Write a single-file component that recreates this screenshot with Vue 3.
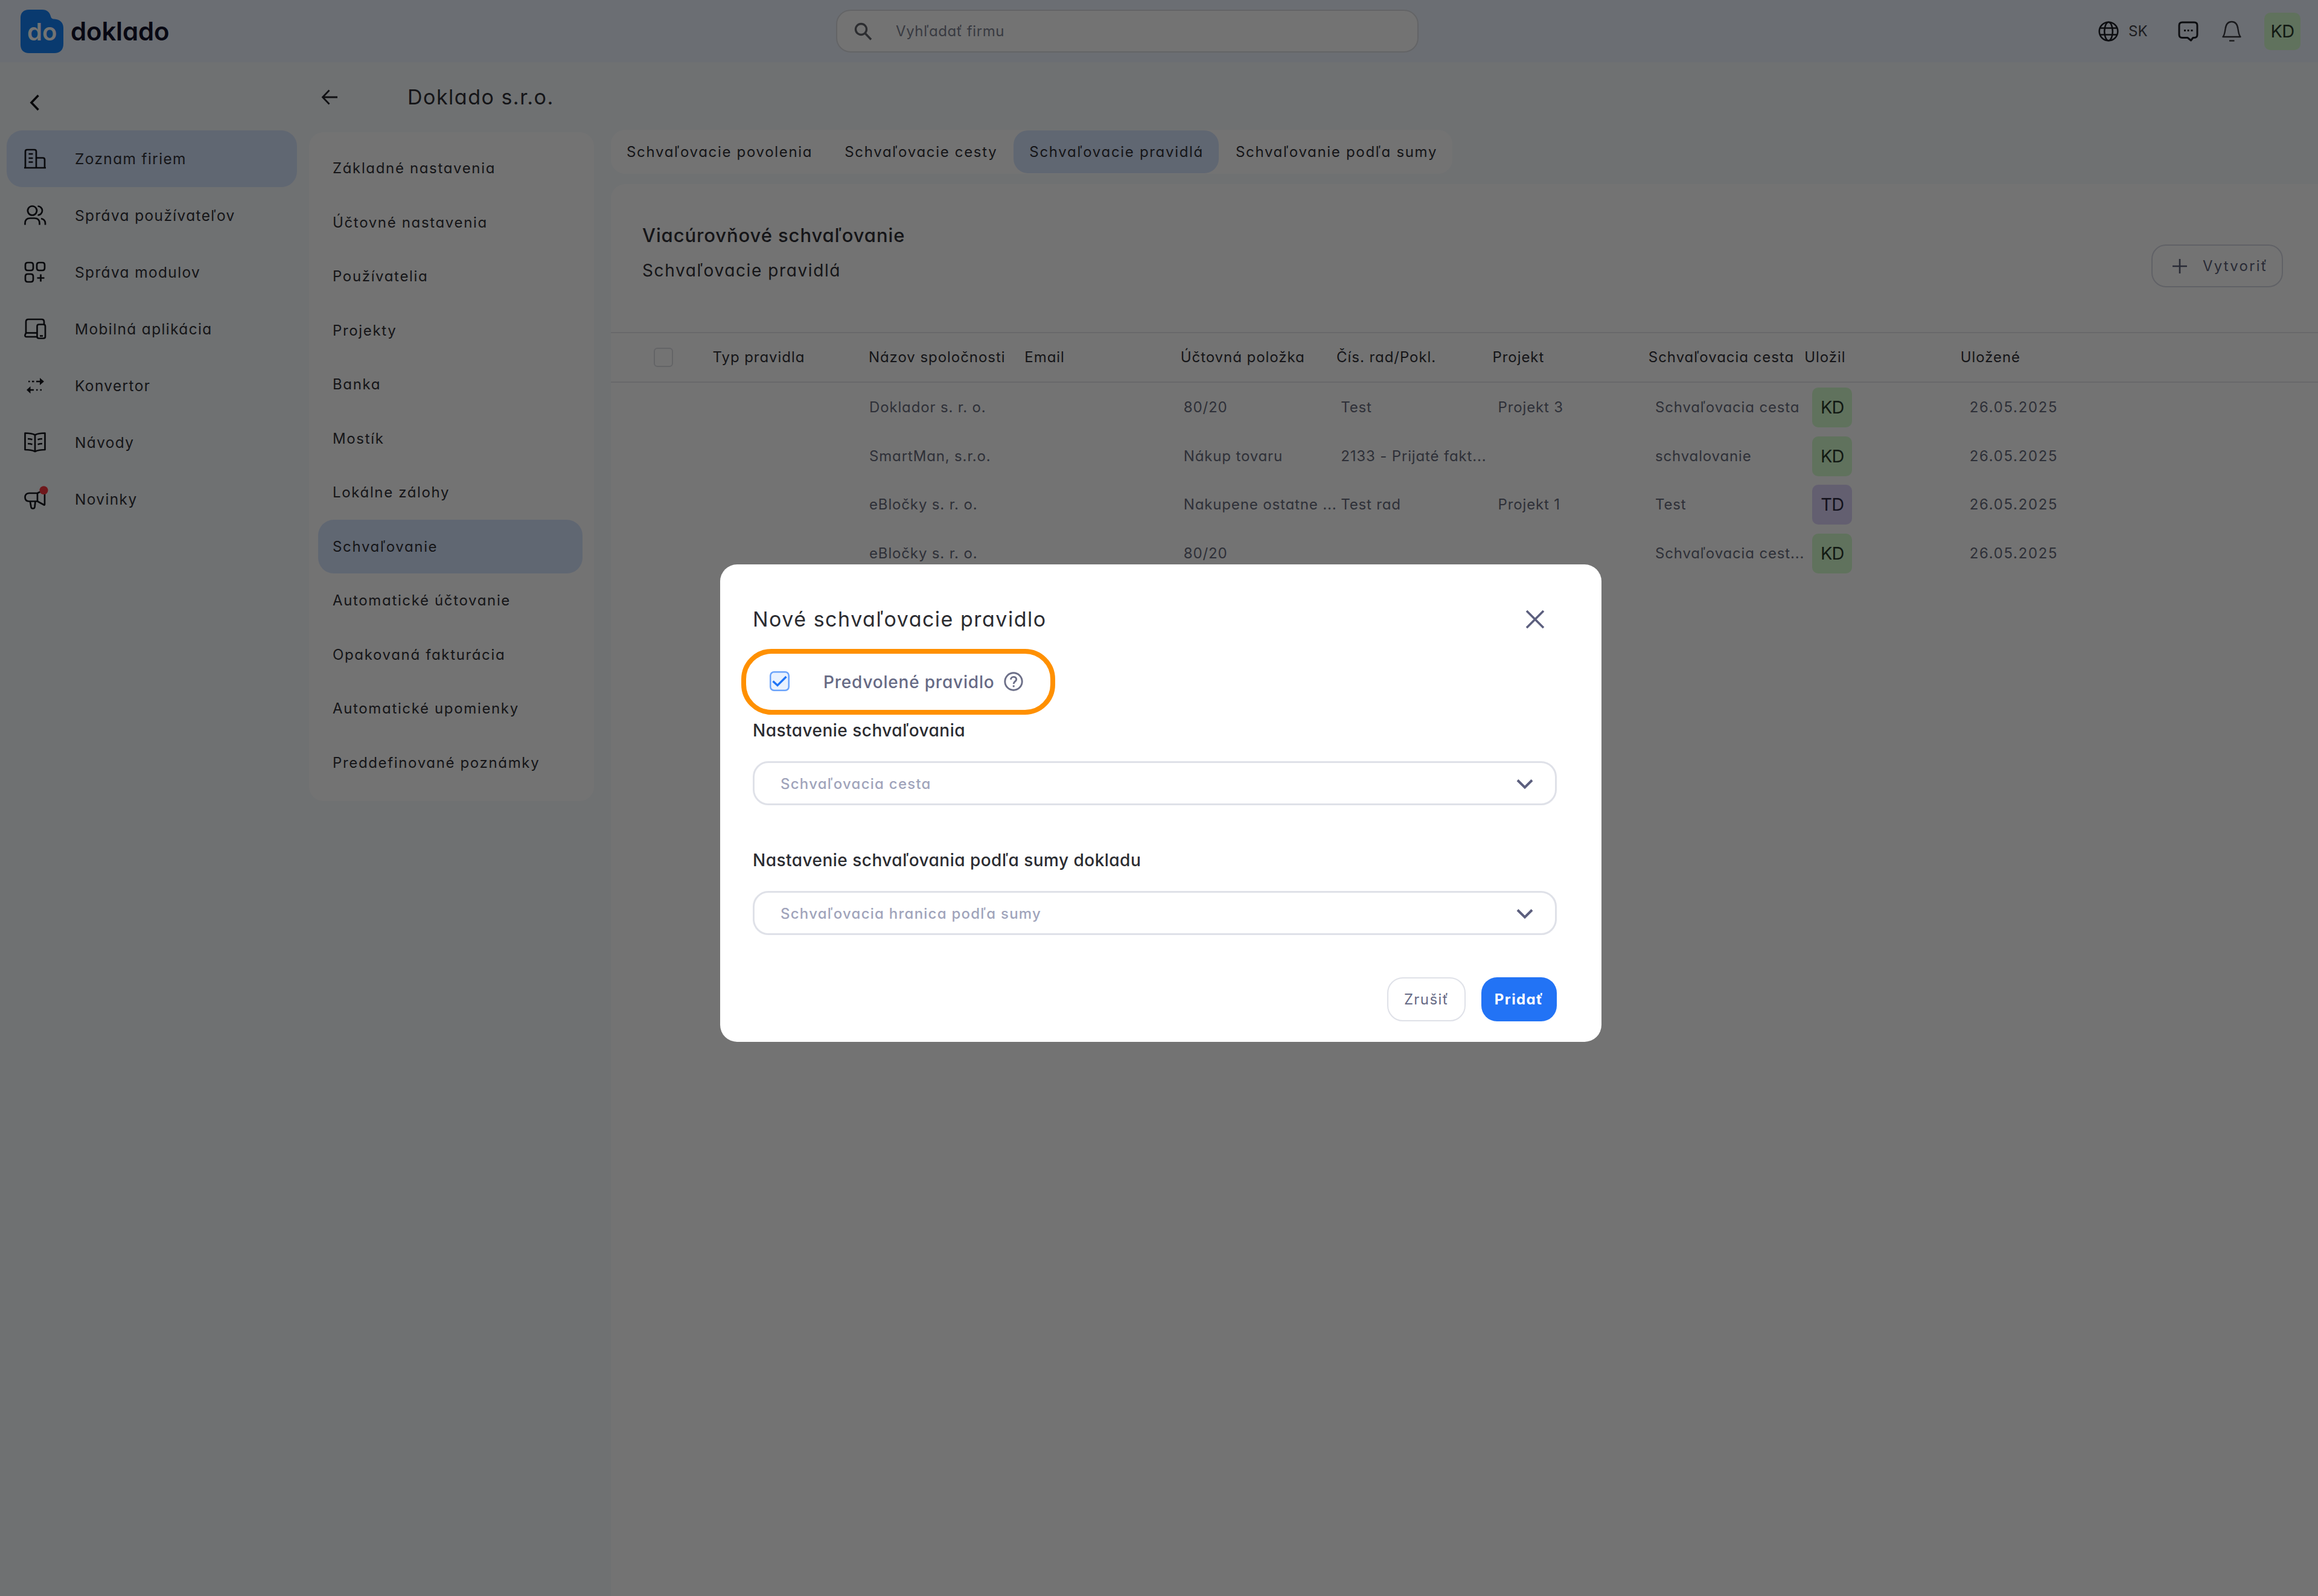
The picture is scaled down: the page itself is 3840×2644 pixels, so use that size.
<template>
    <div class="page">
        <header class="header">
            <div class="logo">
                <div class="logo-mark">
                    <svg class="logo-bg" viewBox="0 0 71 72">
                        <path d="M14 0H36C44 0 48 4 50 11C51 14.500 52.500 15.500 56 15.500C65 16 71 21.500 71 30V57C71 66.500 65.500 72 56 72H14C5 72 0 66.500 0 58V14C0 5 5 0 14 0Z" fill="#1580f5"/>
                    </svg>
                    <span class="logo-do">do</span>
                </div>
                <span class="logo-name">doklado</span>
            </div>
            <div class="search">
                <svg class="search-icon" viewBox="0 0 30 30" fill="none" stroke="#62646c" stroke-width="3.400">
                    <circle cx="11.500" cy="11.500" r="9"/>
                    <path d="M18 18L28 28.500"/>
                </svg>
                <span class="search-text">Vyhľadať firmu</span>
            </div>
            <div class="header-right">
                <svg class="globe" viewBox="0 0 34 34" fill="none" stroke="#1c1d24" stroke-width="2.600">
                    <circle cx="17" cy="17" r="15.300"/>
                    <ellipse cx="17" cy="17" rx="6.800" ry="15.300"/>
                    <path d="M3 11.500H31M3 22.500H31"/>
                </svg>
                <span class="lang">SK</span>
                <svg class="chat" viewBox="0 0 34 34" fill="none" stroke="#1c1d24" stroke-width="3">
                    <path d="M7 2H27Q32 2 32 7V22.500Q32 27.500 27 27.500H25L21.500 32L16 27.500H7Q2 27.500 2 22.500V7Q2 2 7 2Z" stroke-linejoin="round"/>
                    <path d="M10 15.500H13M15.700 15.500H18.500M21.500 15.500H24.500"/>
                </svg>
                <svg class="bell" viewBox="0 0 34 36" fill="none" stroke="#3a3b42" stroke-width="2.400">
                    <path d="M2.500 27H31.500C28.500 23.500 28.500 20 27.500 14C26.500 6 23 2 17 2C11 2 7.500 6 6.500 14C5.500 20 5.500 23.500 2.500 27Z" stroke-linejoin="round"/>
                    <path d="M13 33.500H21.500"/>
                </svg>
                <div class="avatar avatar-head">KD</div>
            </div>
        </header>

        <div class="body">
            <aside class="sidebar">
                <svg class="collapse" viewBox="0 0 18 28" fill="none" stroke="#111218" stroke-width="3.600">
                    <path d="M15.500 2L4 14L15.500 26"/>
                </svg>
                <nav>
                    <div class="side-item" v-for="item in menu" :key="item.title" :class="{ active: item.active }">
                        <svg class="side-icon" viewBox="0 0 36 36" fill="none" stroke="#16171d" stroke-width="2.700" stroke-linejoin="round">
                            <path v-for="d in item.paths" :key="d" :d="d"/>
                            <path v-if="item.solid" :d="item.solid" fill="#16171d" stroke="none"/>
                            <circle v-if="item.dot" cx="32.500" cy="3.300" r="7" fill="#f5363e" stroke="none"/>
                        </svg>
                        <span>{{ item.title }}</span>
                    </div>
                </nav>
            </aside>

            <main class="main">
                <div class="title-bar">
                    <svg class="back" viewBox="0 0 28 28" fill="none" stroke="#24252b" stroke-width="2.800">
                        <path d="M27 14H2.500M13.500 2.500L2.500 14L13.500 25.500"/>
                    </svg>
                    <h1>Doklado s.r.o.</h1>
                </div>
                <div class="columns">
                    <div class="submenu">
                        <div class="sub-item" v-for="item in submenu" :key="item" :class="{ active: item === 'Schvaľovanie' }">{{ item }}</div>
                    </div>
                    <section class="content">
                        <div class="tabs">
                            <div class="tab" v-for="tab in tabs" :key="tab" :class="{ active: tab === 'Schvaľovacie pravidlá' }">{{ tab }}</div>
                        </div>
                        <div class="card">
                            <div class="card-head">
                                <div>
                                    <h2>Viacúrovňové schvaľovanie</h2>
                                    <p class="subtitle">Schvaľovacie pravidlá</p>
                                </div>
                                <button class="create">
                                    <svg viewBox="0 0 24 24" fill="none" stroke="#5c5f78" stroke-width="2.600">
                                        <path d="M12 0V24M0 12H24"/>
                                    </svg>
                                    <span>Vytvoriť</span>
                                </button>
                            </div>
                            <div class="table-head">
                                <div><span class="check-empty"></span></div>
                                <div v-for="col in columns" :key="col">{{ col }}</div>
                            </div>
                            <div class="table-row" v-for="(row, i) in rows" :key="i">
                                <div v-for="(cell, j) in row.cells" :key="j" class="cell">{{ cell }}</div>
                                <div><div class="avatar" :class="{ violet: row.user === 'TD' }">{{ row.user }}</div></div>
                                <div class="cell date">26.05.2025</div>
                            </div>
                        </div>
                    </section>
                </div>
            </main>
        </div>

        <div class="overlay"></div>
        <div class="modal">
            <div class="modal-head">
                <h3>Nové schvaľovacie pravidlo</h3>
                <svg class="close" viewBox="0 0 32 32" fill="none" stroke="#5c5f7e" stroke-width="3.600">
                    <path d="M2 2L30 30M30 2L2 30"/>
                </svg>
            </div>
            <div class="default-rule">
                <svg class="checkbox" viewBox="0 0 33 33" fill="none">
                    <rect x="1.250" y="1.250" width="30.500" height="30.500" rx="6" fill="#e9f2ff" stroke="#6ba3fa" stroke-width="2.500"/>
                    <path d="M5.500 16.500L13 23.500L27.500 9" stroke="#1f74f6" stroke-width="3.400"/>
                </svg>
                <span class="default-text">Predvolené pravidlo</span>
                <svg class="help" viewBox="0 0 32 32" fill="none" stroke="#6c6f88" stroke-width="2.900">
                    <circle cx="16" cy="16" r="14.200"/>
                    <path d="M11.500 12.800C11.500 7 20.700 7 20.700 12.500C20.700 16 16.200 16 16.200 20"/>
                    <path d="M16.200 22.300V25.300"/>
                </svg>
            </div>
            <div class="label">Nastavenie schvaľovania</div>
            <div class="select">
                <span>Schvaľovacia cesta</span>
                <svg viewBox="0 0 28 18" fill="none" stroke="#5c5f7e" stroke-width="4">
                    <path d="M2 2.500L14 14.500L26 2.500"/>
                </svg>
            </div>
            <div class="label label-sum">Nastavenie schvaľovania podľa sumy dokladu</div>
            <div class="select">
                <span>Schvaľovacia hranica podľa sumy</span>
                <svg viewBox="0 0 28 18" fill="none" stroke="#5c5f7e" stroke-width="4">
                    <path d="M2 2.500L14 14.500L26 2.500"/>
                </svg>
            </div>
            <div class="actions">
                <button class="cancel">Zrušiť</button>
                <button class="submit">Pridať</button>
            </div>
        </div>
    </div>
</template>

<script setup>
import { ref } from 'vue'

const menu = ref([
    {
        title: 'Zoznam firiem',
        active: true,
        paths: [
            'M0 33H36',
            'M2 33V6Q2 3 5 3H17Q20 3 20 6V33',
            'M20 16.500H31Q34 16.500 34 19.500V33',
            'M7.500 10H14.500M7.500 17H14.500M7.500 23.500H14.500'
        ]
    },
    {
        title: 'Správa používateľov',
        paths: [
            'M13.500 2.500A7.500 7.500 0 1 1 13.400 2.500Z',
            'M1.500 33.500V31Q1.500 22.500 10 22.500H17Q25.500 22.500 25.500 31V33.500',
            'M22.500 2.500A7.500 7.500 0 0 1 22.500 17.500',
            'M28 23Q35 24.500 35 31V33.500'
        ]
    },
    {
        title: 'Správa modulov',
        paths: [
            'M6 2H11Q15 2 15 6V11Q15 15 11 15H6Q2 15 2 11V6Q2 2 6 2Z',
            'M25 2H30Q34 2 34 6V11Q34 15 30 15H25Q21 15 21 11V6Q21 2 25 2Z',
            'M6 21H11Q15 21 15 25V30Q15 34 11 34H6Q2 34 2 30V25Q2 21 6 21Z',
            'M27.500 21.500V33.500M21.500 27.500H33.500'
        ]
    },
    {
        title: 'Mobilná aplikácia',
        paths: [
            'M33 10V6Q33 2 29 2H7Q3 2 3 6V24.500L1.500 28Q1 31 4 31H21',
            'M3 24.500H21',
            'M24.500 10.500H32Q35 10.500 35 13.500V30.500Q35 33.500 32 33.500H24.500Q21.500 33.500 21.500 30.500V13.500Q21.500 10.500 24.500 10.500Z',
            'M26 29.500H31'
        ]
    },
    {
        title: 'Konvertor',
        paths: ['M7 11H9.500M13 11H16.500M20 11H28', 'M8 25H16M20 25H22.500M26.500 25H29'],
        solid: 'M26 5L33 11L26 17ZM10.500 19L4 25L10.500 31Z'
    },
    {
        title: 'Návody',
        paths: [
            'M18 5.500C13 3 8 2.500 1.500 2.500V30C8 30 13 30.500 18 33C23 30.500 28 30 34.500 30V2.500C28 2.500 23 3 18 5.500Z',
            'M18 5.500V33',
            'M6 12C8.500 12 11 12.300 13.500 13.200M6 20C8.500 20 11 20.300 13.500 21.200M30 12C27.500 12 25 12.300 22.500 13.200M30 20C27.500 20 25 20.300 22.500 21.200'
        ]
    },
    {
        title: 'Novinky',
        dot: true,
        paths: [
            'M22 8H8Q1.500 8.500 1.500 15Q1.500 21 8 21.500H22L33 27.500Q34 28 34 26V2L22 8Z',
            'M22 8V21.500',
            'M10 22L11.500 31Q12 33.500 14.500 33.500Q17 33.500 17.500 31L18.500 22'
        ]
    }
])

const submenu = ref([
    'Základné nastavenia',
    'Účtovné nastavenia',
    'Používatelia',
    'Projekty',
    'Banka',
    'Mostík',
    'Lokálne zálohy',
    'Schvaľovanie',
    'Automatické účtovanie',
    'Opakovaná fakturácia',
    'Automatické upomienky',
    'Preddefinované poznámky'
])

const tabs = ref([
    'Schvaľovacie povolenia',
    'Schvaľovacie cesty',
    'Schvaľovacie pravidlá',
    'Schvaľovanie podľa sumy'
])

const columns = ref([
    'Typ pravidla',
    'Názov spoločnosti',
    'Email',
    'Účtovná položka',
    'Čís. rad/Pokl.',
    'Projekt',
    'Schvaľovacia cesta',
    'Uložil',
    'Uložené'
])

const rows = ref([
    { cells: ['Doklador s. r. o.', '', '80/20', 'Test', 'Projekt 3', 'Schvaľovacia cesta'], user: 'KD' },
    { cells: ['SmartMan, s.r.o.', '', 'Nákup tovaru', '2133 - Prijaté fakt...', '', 'schvalovanie'], user: 'KD' },
    { cells: ['eBločky s. r. o.', '', 'Nakupene ostatne ...', 'Test rad', 'Projekt 1', 'Test'], user: 'TD' },
    { cells: ['eBločky s. r. o.', '', '80/20', '', '', 'Schvaľovacia cest...'], user: 'KD' }
])
</script>

<style>
body {
    margin: 0;
}
</style>

<style scoped>
.page {
    position: relative;
    width: 3840px;
    height: 2644px;
    overflow: hidden;
    display: flex;
    flex-direction: column;
    background: #f7fafd;
    color: #2f3036;
    font-family: Inter, "Liberation Sans", sans-serif;
    font-feature-settings: "cv11";
    font-size: 24px;
    line-height: 36px;
}

h1, h2, h3, p {
    margin: 0;
    font-weight: 400;
}

button {
    font: inherit;
    font-feature-settings: inherit;
    padding: 0;
    box-sizing: border-box;
    background: none;
}

.header {
    height: 103px;
    flex: none;
    display: flex;
    align-items: center;
    background: #eef4ff;
}

.logo {
    width: 1351px;
    padding-left: 34px;
    display: flex;
    align-items: center;
    gap: 12px;
}

.logo-mark {
    position: relative;
    width: 71px;
    height: 72px;
}

.logo-bg {
    display: block;
    width: 71px;
    height: 72px;
}

.logo-do {
    position: absolute;
    left: 11px;
    top: 15px;
    font-size: 40px;
    line-height: 43px;
    font-weight: 600;
    color: #fff;
}

.logo-name {
    font-size: 42px;
    line-height: 54px;
    font-weight: 600;
    letter-spacing: -0.2px;
    color: #12132a;
}

.search {
    width: 965px;
    height: 71px;
    box-sizing: border-box;
    border: 2px solid #dcdee3;
    border-radius: 24px;
    background: #fff;
    display: flex;
    align-items: center;
    padding-left: 28px;
}

.search-icon {
    width: 30px;
    height: 30px;
    margin-right: 39px;
}

.search-text {
    letter-spacing: 0.6px;
    color: #7c8190;
}

.header-right {
    margin-left: auto;
    display: flex;
    align-items: center;
    padding-right: 29px;
}

.globe {
    width: 34px;
    height: 34px;
    margin-right: 16px;
}

.lang {
    width: 82px;
    color: #3f4048;
}

.chat {
    width: 34px;
    height: 34px;
    margin-right: 38px;
}

.bell {
    width: 34px;
    height: 36px;
    margin-right: 37px;
}

.avatar {
    width: 66px;
    height: 66px;
    border-radius: 10px;
    background: #d6fccf;
    color: #29382b;
    display: flex;
    align-items: center;
    justify-content: center;
    font-size: 29px;
    letter-spacing: -0.8px;
}

.avatar.violet {
    background: #dbd3f9;
    color: #2c2840;
}

.avatar-head {
    width: 60px;
    height: 62px;
}

.body {
    flex: 1;
    display: flex;
}

.sidebar {
    width: 512px;
    flex: none;
}

.collapse {
    display: block;
    width: 18px;
    height: 28px;
    margin: 53px 0 32px 48px;
}

.side-item {
    height: 94px;
    width: 481px;
    margin-left: 11px;
    box-sizing: border-box;
    padding-left: 29px;
    display: flex;
    align-items: center;
    gap: 48px;
    border-radius: 26px;
    font-size: 24.500px;
    letter-spacing: 1.35px;
}

.side-icon {
    width: 36px;
    height: 36px;
    overflow: visible;
}

.active {
    background: #d6e4fd;
}

.main {
    flex: 1;
    display: flex;
    flex-direction: column;
}

.title-bar {
    height: 112px;
    box-sizing: border-box;
    padding: 4px 0 0 20px;
    display: flex;
    align-items: center;
}

.back {
    width: 28px;
    height: 28px;
    margin-right: 115px;
}

h1 {
    font-size: 34px;
    line-height: 44px;
    letter-spacing: 1.5px;
}

.columns {
    flex: 1;
    display: flex;
    gap: 28px;
}

.submenu {
    width: 472px;
    height: 1108px;
    box-sizing: border-box;
    margin-top: 4px;
    padding: 15px 19px 0 15px;
    border-radius: 24px;
    background: #fff;
}

.sub-item {
    height: 89.500px;
    line-height: 89.500px;
    padding-left: 24px;
    border-radius: 26px;
    letter-spacing: 1.65px;
}

.content {
    flex: 1;
    display: flex;
    flex-direction: column;
}

.tabs {
    align-self: flex-start;
    display: flex;
    gap: 2px;
    height: 73px;
    border-radius: 24px;
    background: #fff;
}

.tab {
    padding: 0 25px 0 26px;
    height: 71px;
    line-height: 72px;
    margin-top: 1px;
    border-radius: 24px;
    letter-spacing: 1.68px;
}

.card {
    flex: 1;
    margin-top: 17px;
    border-radius: 24px 0 0 0;
    background: #fff;
}

.card-head {
    height: 245px;
    box-sizing: border-box;
    padding: 64px 58px 0 52px;
    display: flex;
    justify-content: space-between;
}

h2 {
    font-size: 31px;
    line-height: 42px;
    font-weight: 500;
    letter-spacing: 0.9px;
}

.subtitle {
    margin-top: 19px;
    font-size: 28px;
    line-height: 36px;
    letter-spacing: 1.6px;
}

.create {
    width: 218px;
    height: 71px;
    margin-top: 36px;
    padding-left: 33px;
    border: 2px solid #d5d7e2;
    border-radius: 24px;
    display: flex;
    align-items: center;
    gap: 26px;
    letter-spacing: 2.2px;
    color: #5c5f78;
}

.create svg {
    width: 24px;
    height: 24px;
}

.table-head {
    height: 84px;
    box-sizing: border-box;
    border-top: 2px solid #e6e7ea;
    border-bottom: 2px solid #e6e7ea;
    display: grid;
    grid-template-columns: 168.500px repeat(9, 258.400px);
    align-items: center;
    letter-spacing: 0.95px;
}

.table-head div {
    white-space: nowrap;
}

.check-empty {
    display: block;
    width: 28px;
    height: 28px;
    margin-left: 71px;
    border: 2px solid #dcdde3;
    border-radius: 6px;
}

.table-row {
    height: 80.500px;
    padding-left: 428px;
    display: grid;
    grid-template-columns: repeat(8, 260.400px);
    align-items: center;
    color: #676b7c;
}

.table-head + .table-row {
    margin-top: 1px;
}

.cell {
    white-space: nowrap;
    letter-spacing: 0.85px;
}

.date {
    letter-spacing: 1.65px;
}

.overlay {
    position: absolute;
    inset: 0;
    background: rgba(0, 0, 0, 0.55);
}

.modal {
    position: absolute;
    left: 1193px;
    top: 935px;
    width: 1460px;
    height: 791px;
    box-sizing: border-box;
    padding: 69px 74px 0 54px;
    border-radius: 28px;
    background: #fff;
}

.modal-head {
    display: flex;
    justify-content: space-between;
    align-items: center;
    height: 44px;
    padding-right: 20px;
}

h3 {
    font-size: 34px;
    letter-spacing: 1.5px;
    color: #2b2c31;
}

.close {
    width: 32px;
    height: 32px;
}

.default-rule {
    width: 520px;
    height: 109px;
    box-sizing: border-box;
    margin: 27px 0 0 -19px;
    border: 8px solid #ff9000;
    border-radius: 50px;
    padding-left: 39px;
    display: flex;
    align-items: center;
    color: #666a85;
}

.checkbox {
    width: 33px;
    height: 33px;
    margin: 0 56px 3px 0;
}

.default-text {
    width: 299px;
    font-size: 28px;
    font-weight: 500;
    letter-spacing: 0.8px;
    white-space: nowrap;
}

.help {
    width: 32px;
    height: 32px;
    margin-bottom: 2px;
}

.label {
    margin-top: 8px;
    font-size: 28px;
    font-weight: 500;
    letter-spacing: 0.48px;
    color: #2b2c31;
}

.label-sum {
    margin-top: 73px;
}

.select {
    height: 73px;
    box-sizing: border-box;
    margin-top: 33px;
    border: 3px solid #dfe1e8;
    border-radius: 26px;
    padding: 2px 36px 0 43px;
    display: flex;
    align-items: center;
    justify-content: space-between;
    font-weight: 500;
    letter-spacing: 1.25px;
    color: #a0a4bb;
}

.select svg {
    width: 28px;
    height: 18px;
}

.actions {
    margin-top: 70px;
    display: flex;
    justify-content: flex-end;
    gap: 26px;
}

.cancel, .submit {
    height: 73px;
    border-radius: 26px;
    letter-spacing: 1.4px;
}

.cancel {
    width: 130px;
    border: 2px solid #dfe1e8;
    color: #666a85;
}

.submit {
    width: 125px;
    border: none;
    background: #2273f5;
    color: #fff;
    font-weight: 700;
}
</style>
